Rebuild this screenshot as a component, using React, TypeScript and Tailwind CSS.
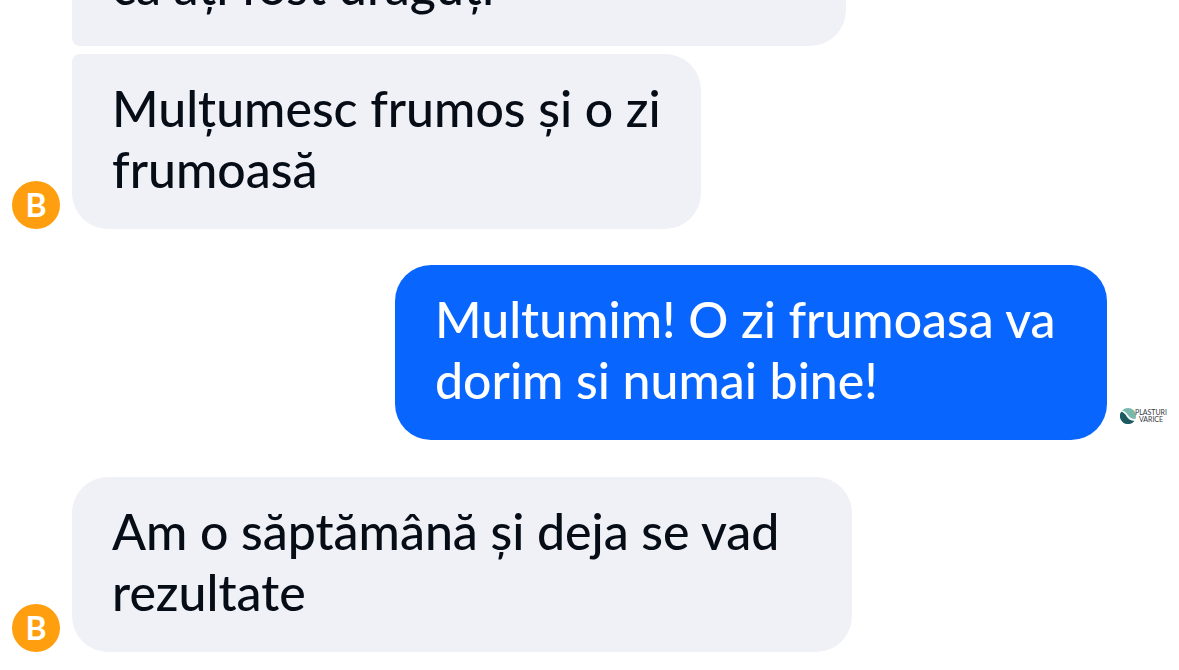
import type { ReactNode } from 'react';

function Avatar() {
  return (
    <div
      aria-label="B"
      className="flex size-12 shrink-0 items-center justify-center rounded-full bg-[#ff9f0f] font-['Lato','Noto_Sans',sans-serif] text-[32px] leading-none font-bold text-white"
    >
      B
    </div>
  );
}

function Bubble({ className, lines }: { className: string; lines: string[] }) {
  return (
    <div className={`shrink-0 px-10 pt-6 pb-[29px] text-[50px] leading-[61px] font-medium whitespace-nowrap ${className}`}>
      {lines.map((line) => (
        <p key={line}>{line}</p>
      ))}
    </div>
  );
}

function Incoming({ children }: { children: ReactNode }) {
  return <div className="flex items-end gap-3 text-[#070d17]">{children}</div>;
}

function BrandLogo() {
  return (
    <div className="mb-3 flex h-6 w-12 shrink-0 items-center text-[#33383b]">
      <svg viewBox="0 0 18 18" className="size-[18px] shrink-0" aria-hidden="true">
        <circle cx="9" cy="9" r="8" fill="#79b8ad" />
        <path d="M2.4 4.5A8 8 0 0 0 15.5 13.7Q10.5 14 8 10Q5.5 5.5 2.4 4.5Z" fill="#1d5961" />
        <path d="M1.5 3.8Q6 4.5 8.6 9Q11 13.2 17 12.8" fill="none" stroke="#fff" strokeWidth="1.6" />
      </svg>
      <p className="-ml-0.5 text-center text-[7px] leading-[7px]">
        PLASTURI
        <br />
        VARICE
      </p>
    </div>
  );
}

export default function App() {
  return (
    <main className="flex h-screen flex-col overflow-hidden bg-white px-3 font-['Lato','Noto_Sans',sans-serif]">
      <div className="flex h-[46px] shrink-0 items-end pl-[60px] text-[#070d17]">
        <Bubble
          className="w-[774px] rounded-[36px] rounded-bl-lg bg-[#f0f1f6]"
          lines={['că ați fost drăguți']}
        />
      </div>
      <div className="mt-2">
        <Incoming>
          <Avatar />
          <Bubble
            className="w-[629px] rounded-[36px] rounded-tl-lg bg-[#f0f1f6]"
            lines={['Mulțumesc frumos și o zi', 'frumoasă']}
          />
        </Incoming>
      </div>
      <div className="mt-9 flex items-end justify-end gap-3">
        <Bubble
          className="w-[712px] rounded-[36px] bg-[#0866ff] text-white"
          lines={['Multumim! O zi frumoasa va', 'dorim si numai bine!']}
        />
        <BrandLogo />
      </div>
      <div className="mt-[37px]">
        <Incoming>
          <Avatar />
          <Bubble
            className="w-[780px] rounded-[36px] bg-[#f0f1f6]"
            lines={['Am o săptămână și deja se vad', 'rezultate']}
          />
        </Incoming>
      </div>
    </main>
  );
}
